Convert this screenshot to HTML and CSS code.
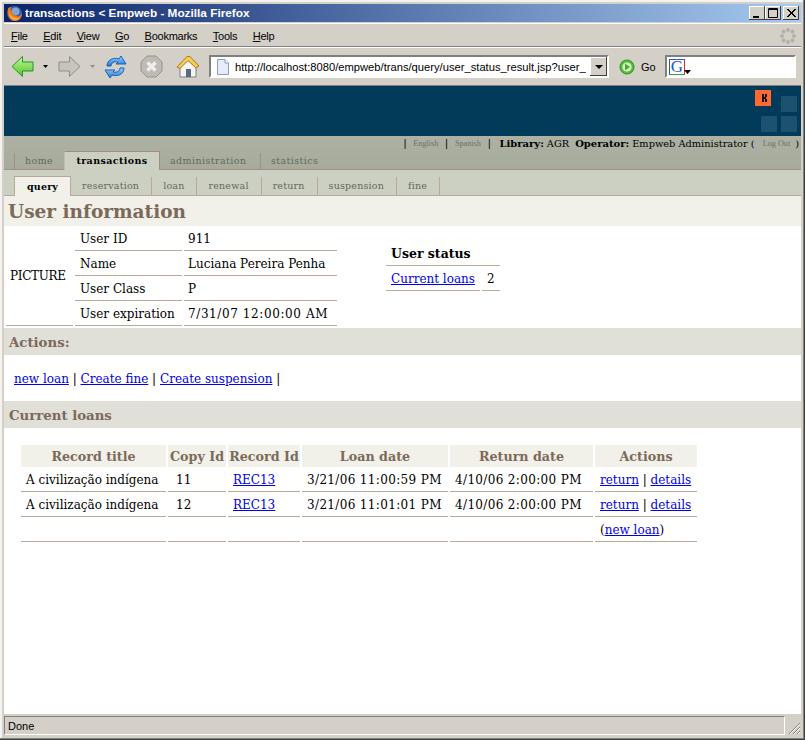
FILE: index.html
```html
<!DOCTYPE html>
<html>
<head>
    <title>transactions &lt; Empweb - Mozilla Firefox</title>
    <meta charset="UTF-8">
    <link rel="stylesheet" href="styles.css">
</head>
<body>
    <div class="window">
        <div class="titlebar">
            <svg class="fx-icon" width="17" height="17" viewBox="0 0 17 17">
                <circle cx="8.5" cy="8.5" r="7.5" fill="#3a5f9e"/>
                <circle cx="9.5" cy="6.5" r="4" fill="#7fa4d6"/>
                <path d="M2 4 C1 9 3 16 9 16 C14 16 16 12 16 8 C15 11 12 12 10 11 C7 10 6 8 7 6 C5 7 4 5 5 2 C3 2 2 3 2 4 Z" fill="#ee7a1c"/>
                <path d="M3 8 C3 12 6 15 9 15 C11 15 13 14 14 13 C11 14 6 13 3 8 Z" fill="#f9b233"/>
            </svg>
            <span class="title-text">transactions &lt; Empweb - Mozilla Firefox</span>
            <div class="win-buttons">
                <span class="win-btn"><svg width="16" height="14" viewBox="0 0 16 14"><rect x="4" y="10" width="6" height="2" fill="#000"/></svg></span>
                <span class="win-btn"><svg width="16" height="14" viewBox="0 0 16 14"><path d="M3.5 2.5h9v9h-9z M3 3.5h10" fill="none" stroke="#000"/></svg></span>
                <span class="win-btn close"><svg width="16" height="14" viewBox="0 0 16 14"><path d="M4 3l8 8M5 3l8 8M12 3l-8 8M13 3l-8 8" stroke="#000" stroke-width="1"/></svg></span>
            </div>
        </div>

        <div class="menubar">
            <div class="menu-items">
                <span><u>F</u>ile</span>
                <span><u>E</u>dit</span>
                <span><u>V</u>iew</span>
                <span><u>G</u>o</span>
                <span><u>B</u>ookmarks</span>
                <span><u>T</u>ools</span>
                <span><u>H</u>elp</span>
            </div>
            <svg class="throbber" width="16" height="16" viewBox="0 0 16 16">
                <g fill="#b4b0a8">
                    <circle cx="8" cy="2" r="2"/><circle cx="12.5" cy="3.5" r="2"/><circle cx="14" cy="8" r="2"/><circle cx="12.5" cy="12.5" r="2"/>
                    <circle cx="8" cy="14" r="2"/><circle cx="3.5" cy="12.5" r="2"/><circle cx="2" cy="8" r="2"/><circle cx="3.5" cy="3.5" r="2"/>
                </g>
            </svg>
        </div>

        <div class="toolbar">
            <svg class="tool back" width="23" height="23" viewBox="0 0 23 23">
                <defs>
                    <linearGradient id="greenFill" x1="0" y1="0" x2="0" y2="1"><stop offset="0" stop-color="#c8f59a"/><stop offset="1" stop-color="#4ec52e"/></linearGradient>
                    <linearGradient id="blueFill" x1="0" y1="0" x2="0" y2="1"><stop offset="0" stop-color="#9fd0f7"/><stop offset="1" stop-color="#1f78dc"/></linearGradient>
                </defs>
                <path d="M1 11.5 L11.5 1.5 V7 H22 V16 H11.5 V21.5 Z" fill="url(#greenFill)" stroke="#1f9a1a" stroke-linejoin="round"/>
            </svg>
            <svg class="drop" width="5" height="3" viewBox="0 0 5 3"><path d="M0 0h5L2.5 3z" fill="#000"/></svg>
            <svg class="tool forward" width="23" height="23" viewBox="0 0 23 23">
                <path d="M22 11.5 L11.5 1.5 V7 H1 V16 H11.5 V21.5 Z" fill="#c6c4bd" stroke="#8f8d87" stroke-linejoin="round"/>
            </svg>
            <svg class="drop drop-off" width="5" height="3" viewBox="0 0 5 3"><path d="M0 0h5L2.5 3z" fill="#8f8d87"/></svg>
            <svg class="tool reload" width="23" height="24" viewBox="0 0 23 24">
                <path d="M3 11 C3 5 9 2 15 4 L17 1 L22 9 L12 9 L14 7 C10 6 7 8 7 11 Z" fill="url(#blueFill)" stroke="#1760b8"/>
                <path d="M20 13 C20 19 14 22 8 20 L6 23 L1 15 L11 15 L9 17 C13 18 16 16 16 13 Z" fill="url(#blueFill)" stroke="#1760b8"/>
            </svg>
            <svg class="tool stop" width="23" height="23" viewBox="0 0 23 23">
                <path d="M7 1 H16 L22 7 V16 L16 22 H7 L1 16 V7 Z" fill="#bdbbb4" stroke="#96948e"/>
                <path d="M7.5 7.5 L15.5 15.5 M15.5 7.5 L7.5 15.5" stroke="#f0eeea" stroke-width="3.5"/>
            </svg>
            <svg class="tool home" width="24" height="24" viewBox="0 0 24 24">
                <path d="M4 11 V22 H20 V11 L12 4 Z" fill="#f4f4f2" stroke="#7b7f88"/>
                <path d="M1 12 L11 1.5 L14 1.5 L23 11 L20 13 L12 5.5 L4 13.5 Z" fill="#f6cc52" stroke="#a57a1e" stroke-linejoin="round"/>
                <rect x="10" y="14" width="5" height="8" fill="#5b6a80"/>
            </svg>
            <div class="urlbar">
                <svg class="page-icon" width="14" height="16" viewBox="0 0 14 16">
                    <path d="M1.5 .5 H9 L12.5 4 V15.5 H1.5 Z" fill="#e6ecf8" stroke="#8a9cc4"/>
                    <path d="M9 .5 V4 H12.5" fill="#fff" stroke="#8a9cc4"/>
                </svg>
                <span class="url-text">http://localhost:8080/empweb/trans/query/user_status_result.jsp?user_</span>
                <span class="url-drop"><svg width="8" height="4" viewBox="0 0 8 4"><path d="M0 0h8L4 4z" fill="#000"/></svg></span>
            </div>
            <svg class="go-icon" width="16" height="16" viewBox="0 0 16 16">
                <circle cx="8" cy="8" r="7" fill="#52c234" stroke="#2a8f1c"/>
                <circle cx="8" cy="8" r="4.6" fill="#dff5cf"/>
                <path d="M6 4.5 L11 8 L6 11.5 Z" fill="#3fae28"/>
            </svg>
            <span class="go-label">Go</span>
            <div class="searchbar">
                <span class="g-badge">G</span>
                <svg class="g-drop" width="7" height="4" viewBox="0 0 7 4"><path d="M0 0h7L3.5 4z" fill="#000"/></svg>
            </div>
        </div>

        <div class="page">
            <div class="banner">
                <svg class="logo" width="42" height="42" viewBox="0 0 42 42">
                    <rect x="0" y="0" width="16" height="16" fill="#ff6a33"/>
                    <path d="M7 4h2v3h1v-3h2v3h-1v2h1v3h-2v-3h-1v3h-2z" fill="#111"/>
                    <rect x="26" y="6" width="16" height="16" fill="#1c5270"/>
                    <rect x="6" y="26" width="16" height="16" fill="#1c5270"/>
                    <rect x="26" y="26" width="16" height="16" fill="#1c5270"/>
                </svg>
            </div>

            <div class="topnav">
                <div class="session">
                    <span class="bar">|</span><a class="faint">English</a>
                    <span class="bar">|</span><a class="faint">Spanish</a>
                    <span class="bar">|</span>
                    <b>Library:</b> <span class="session-val">AGR</span>
                    <b class="op">Operator:</b> <span class="session-val">Empweb Administrator (</span><a class="faint logout">Log Out</a> <span class="session-val">)</span>
                </div>
                <div class="tabs">
                    <a class="tab first">home</a>
                    <a class="tab active">transactions</a>
                    <a class="tab admin">administration</a>
                    <a class="tab stats">statistics</a>
                </div>
            </div>

            <div class="subnav">
                <a class="subtab active">query</a>
                <a class="subtab">reservation</a>
                <a class="subtab">loan</a>
                <a class="subtab">renewal</a>
                <a class="subtab">return</a>
                <a class="subtab">suspension</a>
                <a class="subtab">fine</a>
            </div>

            <h1 class="page-title">User information</h1>

            <div class="user-info">
                <table class="data info-table">
                    <tr>
                        <td rowspan="2" class="no-line"></td>
                        <td class="label">User ID</td>
                        <td class="value">911</td>
                    </tr>
                    <tr>
                        <td class="label">Name</td>
                        <td class="value">Luciana Pereira Penha</td>
                    </tr>
                    <tr>
                        <td rowspan="2" class="picture"><span class="picture-text">PICTURE</span></td>
                        <td class="label">User Class</td>
                        <td class="value">P</td>
                    </tr>
                    <tr>
                        <td class="label">User expiration</td>
                        <td class="value expiry">7/31/07 12:00:00 AM</td>
                    </tr>
                </table>
                <table class="data status-table">
                    <tr><td colspan="2" class="status-head">User status</td></tr>
                    <tr>
                        <td class="status-link"><a href="#">Current loans</a></td>
                        <td class="status-count">2</td>
                    </tr>
                </table>
            </div>

            <h2 class="section">Actions:</h2>
            <div class="actions">
                <a href="#">new loan</a> | <a href="#">Create fine</a> | <a href="#">Create suspension</a> |
            </div>

            <h2 class="section">Current loans</h2>
            <div class="loans">
                <table class="data loans-table">
                    <tr>
                        <th class="col-title">Record title</th>
                        <th class="col-copy">Copy Id</th>
                        <th class="col-rec">Record Id</th>
                        <th class="col-loan">Loan date</th>
                        <th class="col-return">Return date</th>
                        <th class="col-actions">Actions</th>
                    </tr>
                    <tr>
                        <td>A civilização indígena</td>
                        <td class="copy">11</td>
                        <td><a href="#">REC13</a></td>
                        <td class="num">3/21/06 11:00:59 PM</td>
                        <td class="num">4/10/06 2:00:00 PM</td>
                        <td><a href="#">return</a> | <a href="#">details</a></td>
                    </tr>
                    <tr>
                        <td>A civilização indígena</td>
                        <td class="copy">12</td>
                        <td><a href="#">REC13</a></td>
                        <td class="num">3/21/06 11:01:01 PM</td>
                        <td class="num">4/10/06 2:00:00 PM</td>
                        <td><a href="#">return</a> | <a href="#">details</a></td>
                    </tr>
                    <tr>
                        <td></td><td></td><td></td><td></td><td></td>
                        <td>(<a href="#">new loan</a>)</td>
                    </tr>
                </table>
            </div>
        </div>

        <div class="statusbar">
            <span class="status-text">Done</span>
            <svg class="grip" width="13" height="13" viewBox="0 0 13 13">
                <path d="M12 1L1 12M12 5L5 12M12 9L9 12" stroke="#808080" stroke-width="1"/>
                <path d="M12 2L2 12M12 6L6 12M12 10L10 12" stroke="#fff" stroke-width="1"/>
            </svg>
        </div>
    </div>
</body>
</html>
```
FILE: styles.css
```css
html, body {
    margin: 0;
    padding: 0;
    height: 100%;
    overflow: hidden;
}
.window {
    box-sizing: border-box;
    width: 805px;
    height: 740px;
    padding: 4px;
    background: #d4d0c8;
    box-shadow: inset -1px -1px 0 #404040, inset -2px -2px 0 #808080, inset 2px 2px 0 #f4f3ef;
    display: flex;
    flex-direction: column;
    font-family: "Liberation Sans", sans-serif;
    color: #000;
}
.titlebar {
    height: 18px;
    flex: none;
    display: flex;
    align-items: center;
    background: linear-gradient(to right, #0a246a, #a6caf0);
    color: #fff;
}
.fx-icon {
    margin-left: 2px;
    margin-right: 2px;
}
.title-text {
    font-size: 11.8px;
    font-weight: bold;
}
.win-buttons {
    margin-left: auto;
    margin-right: 2px;
    display: flex;
}
.win-btn {
    width: 16px;
    height: 14px;
    background: #d4d0c8;
    box-shadow: inset -1px -1px 0 #404040, inset 1px 1px 0 #fff;
    display: block;
}
.win-btn svg {
    display: block;
}
.win-btn.close {
    margin-left: 2px;
}
.menubar {
    margin-top: 1px;
    height: 24px;
    flex: none;
    display: flex;
    align-items: center;
    border-top: 1px solid #fff;
    border-bottom: 1px solid #808080;
    box-sizing: border-box;
    padding-top: 1px;
}
.menu-items {
    display: flex;
    gap: 15.5px;
    margin-left: 7px;
    font-size: 11px;
    letter-spacing: -0.25px;
}
.throbber {
    margin-left: auto;
    margin-right: 5px;
}
.toolbar {
    height: 38px;
    flex: none;
    display: flex;
    align-items: center;
    border-top: 1px solid #fff;
    box-sizing: border-box;
}
.tool {
    flex: none;
}
.tool.back {
    margin-left: 7px;
}
.drop {
    margin-left: 9px;
    flex: none;
}
.tool.forward {
    margin-left: 10px;
}
.drop.drop-off {
    margin-left: 9px;
}
.tool.reload {
    margin-left: 9px;
}
.tool.stop {
    margin-left: 13px;
}
.tool.home {
    margin-left: 13px;
}
.urlbar {
    margin-left: 9px;
    width: 400px;
    height: 23px;
    box-sizing: border-box;
    background: #fff;
    border: 2px solid;
    border-color: #808080 #fff #fff #808080;
    display: flex;
    align-items: center;
    flex: none;
}
.page-icon {
    margin-left: 5px;
    flex: none;
}
.url-text {
    margin-left: 5px;
    font-size: 11.2px;
    white-space: nowrap;
    flex: 1;
}
.url-drop {
    width: 17px;
    height: 19px;
    background: #d4d0c8;
    box-shadow: inset -1px -1px 0 #404040, inset 1px 1px 0 #fff;
    display: flex;
    align-items: center;
    justify-content: center;
    flex: none;
}
.go-icon {
    margin-left: 10px;
    flex: none;
}
.go-label {
    margin-left: 6px;
    width: 15px;
    font-size: 11px;
}
.searchbar {
    margin-left: 9px;
    width: 131px;
    height: 23px;
    box-sizing: border-box;
    background: #fff;
    border: 2px solid;
    border-color: #808080 #fff #fff #808080;
    display: flex;
    align-items: center;
    flex: none;
}
.g-badge {
    margin-left: 2px;
    width: 16px;
    height: 16px;
    box-sizing: border-box;
    border: 1px solid;
    border-color: #2a55c8 #d03020 #30a040 #2a55c8;
    color: #2a55c8;
    font: 17px/14px "Liberation Serif", serif;
    text-align: center;
}
.g-drop {
    margin-top: 11px;
    margin-left: -1px;
}

/* page content */
.page {
    flex: 1;
    min-height: 0;
    overflow: hidden;
    background: #fff;
    border-top: 1px solid #808080;
    box-sizing: border-box;
    font-family: "DejaVu Serif", serif;
    font-size: 12px;
}
.banner {
    height: 50px;
    background: #023a5a;
    display: flex;
    justify-content: flex-end;
    padding: 4px 4px 0 0;
    box-sizing: border-box;
}
.topnav {
    height: 34px;
    background: linear-gradient(#acb1a3, #a6ab9c);
    border-bottom: 1px solid #a08e80;
    box-sizing: border-box;
    position: relative;
}
.session {
    height: 15px;
    display: flex;
    justify-content: flex-end;
    align-items: center;
    font-size: 10px;
    white-space: pre;
    padding-right: 2px;
}
.session b {
    margin-left: 2px;
    margin-right: 3px;
}
.session .op {
    margin-left: 6px;
}
.session-val {
    font-size: 9.8px;
}
.bar {
    margin: 0 7px 0 0;
    color: #000;
    font-family: "Liberation Sans", sans-serif;
}
.faint {
    color: #6c7068;
    font-family: "Liberation Serif", serif;
    font-size: 8.2px;
    margin-right: 7px;
}
.logout {
    margin-left: 8px;
    margin-right: 5px;
}
.tabs {
    display: flex;
    align-items: flex-end;
    height: 18px;
    padding-left: 10px;
    margin-top: 0;
}
.tab {
    height: 16px;
    box-sizing: border-box;
    padding: 0 10px;
    border-left: 1px solid #a08e80;
    font-size: 9.5px;
    line-height: 16px;
    letter-spacing: 0.42px;
    color: #646a60;
    white-space: nowrap;
}
.tab.first {
    width: 50px;
}
.tab.active {
    width: 96px;
    height: 19px;
    margin-bottom: -1px;
    background: #cbd0c2;
    border: 1px solid #a08e80;
    border-bottom: none;
    border-left: 1px solid #c9b9a8;
    color: #000;
    font-weight: bold;
    font-size: 9.5px;
    line-height: 18px;
    letter-spacing: 0.4px;
    text-align: center;
    padding: 0;
}
.tab.admin {
    width: 100px;
    border-left: none;
}
.subnav {
    height: 26px;
    background: #cbd0c2;
    border-bottom: 1px solid #b8a898;
    box-sizing: border-box;
    display: flex;
    align-items: flex-end;
    padding-left: 10px;
}
.subtab {
    height: 18px;
    box-sizing: border-box;
    border-right: 1px solid #b8a898;
    padding: 0 12px 0 11px;
    font-size: 9.5px;
    line-height: 17px;
    letter-spacing: 0.2px;
    color: #646a60;
    white-space: nowrap;
}
.subtab.active {
    width: 57px;
    height: 20px;
    padding: 0;
    margin-bottom: -1px;
    background: #f1f0e9;
    border-top: 1px solid #b8a898;
    border-left: 1px solid #b8a898;
    border-right: 1px solid #b8a898;
    color: #000;
    font-weight: bold;
    line-height: 19px;
    text-align: center;
}
.page-title {
    margin: 0;
    height: 30px;
    padding-left: 4px;
    background: #f1f0e9;
    color: #7b6a5a;
    font-size: 18.5px;
    font-weight: bold;
    line-height: 32px;
}
.user-info {
    height: 102px;
    box-sizing: border-box;
    display: flex;
    align-items: flex-start;
}
.data {
    border-collapse: separate;
    border-spacing: 2px 0;
}
.data td {
    border-bottom: 1px solid #b8a898;
    padding: 0 5px;
    height: 24px;
    white-space: nowrap;
}
.num {
    letter-spacing: 0.35px;
}
.expiry {
    letter-spacing: 0.6px;
}
.info-table td {
    height: 22px;
    padding-top: 2px;
}
.info-table td.no-line {
    border-bottom: none;
}
.info-table td.label {
    width: 97px;
}
.info-table td.value {
    width: 144px;
    padding-left: 4px;
}
.info-table td.picture {
    vertical-align: top;
    padding: 0 0 0 4px;
    width: 63px;
}
.picture-text {
    display: block;
    margin-top: -7px;
    font-size: 12px;
    letter-spacing: -0.3px;
}
.status-table {
    margin-top: 15px;
    margin-left: 45px;
}
.data td.status-head,
.data td.status-link,
.data td.status-count {
    height: 22px;
    padding-top: 2px;
}
.data td.status-head {
    height: 23px;
    padding-top: 1px;
    font-weight: bold;
    font-size: 12.5px;
}
.status-link {
    width: 84px;
}
.status-count {
    width: 8px;
}
.section {
    margin: 0;
    height: 27px;
    padding-left: 5px;
    background: #e0dfd8;
    color: #7b6a5a;
    font-size: 13.3px;
    font-weight: bold;
    line-height: 30px;
}
.actions {
    height: 46px;
    line-height: 48px;
    padding-left: 10px;
    box-sizing: border-box;
}
.loans {
    padding: 17px 0 0 15px;
}
.loans-table th {
    height: 21px;
    padding: 1px 0 0;
    background: #f1f0e9;
    color: #7b6a5a;
    font-size: 12.7px;
    font-weight: bold;
    white-space: nowrap;
}
.data.loans-table td {
    height: 22px;
    padding-top: 2px;
}
.col-title { width: 145px; }
.col-copy { width: 58px; }
.col-rec { width: 72px; }
.col-loan { width: 146px; }
.col-return { width: 143px; }
.col-actions { width: 102px; }
.data td.copy {
    padding-left: 8px;
}
.statusbar {
    height: 21px;
    flex: none;
    margin-top: 1px;
    display: flex;
    align-items: center;
    font-size: 11px;
}
.status-text {
    flex: 1;
    height: 19px;
    line-height: 19px;
    box-sizing: border-box;
    padding-left: 3px;
    border: 1px solid;
    border-color: #808080 #fff #fff #808080;
    margin-right: 3px;
}
.grip {
    margin-top: 6px;
    flex: none;
}
```
